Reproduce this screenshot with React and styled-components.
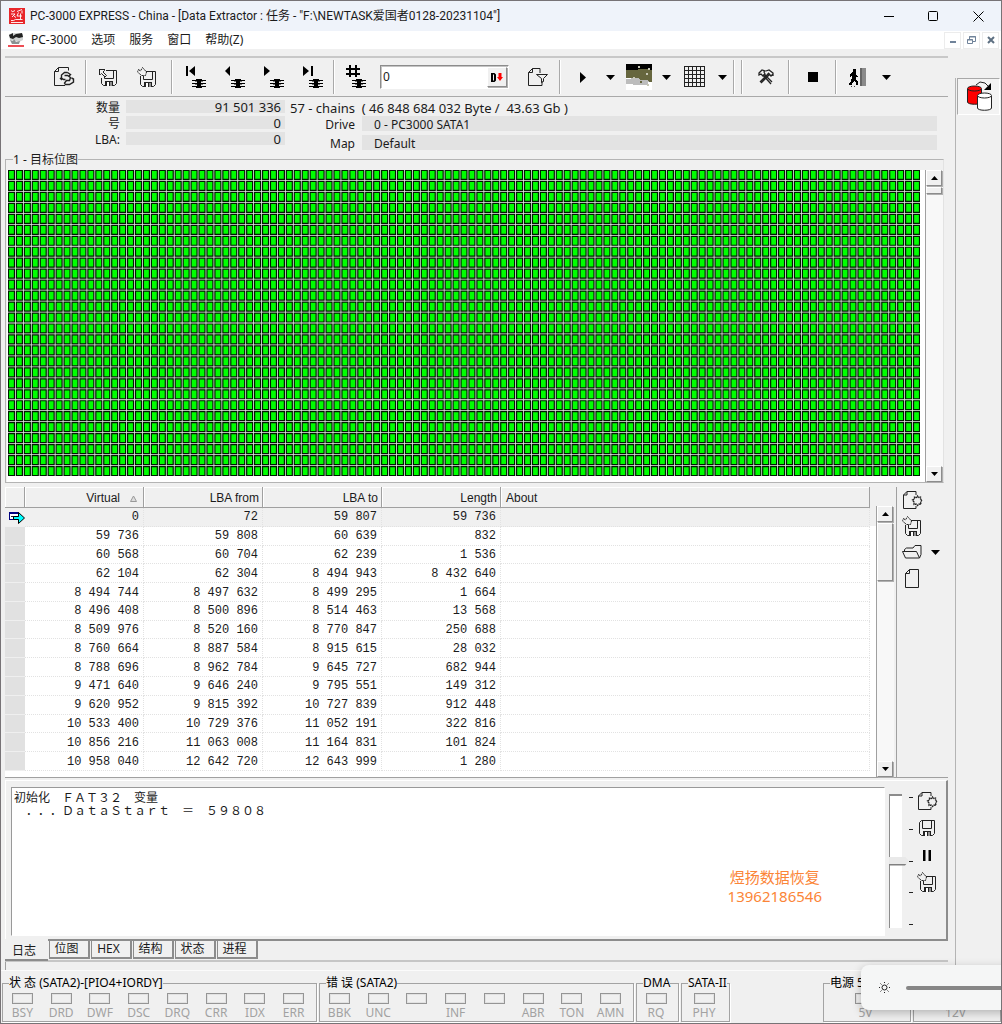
import React from "react";
import styled, { createGlobalStyle, css } from "styled-components";

const UI = `"Noto Sans", "Noto Sans CJK SC", sans-serif`;
const FACE = "#f0f0f0";
const SHADOW = "#8c8c8c";

const Global = createGlobalStyle`
  *, *::before, *::after { box-sizing: border-box; }
  body { margin: 0; background: ${FACE}; font: 12px/16px ${UI}; color: #1b1b1b; }
  button, input, textarea { font: inherit; color: inherit; }
  button { border: 0; padding: 0; background: none; }
  svg { display: block; flex: none; }
`;

/* ---------- frame ---------- */
const Frame = styled.div`
  position: relative;
  display: flex;
  flex-direction: column;
  min-height: 100vh;
  border: 1px solid #777376;
  overflow: hidden;
`;
const TitleBar = styled.header`
  display: flex;
  align-items: center;
  height: 30px;
  padding-left: 8px;
  background: #eff3fa;
`;
const TitleText = styled.h1`
  flex: 1;
  margin: 0 0 0 5px;
  font: 400 12px/16px Roboto, "Noto Sans CJK SC", sans-serif;
  white-space: pre;
`;
const CaptionButton = styled.button`
  display: grid;
  place-items: center;
  width: 45px;
  height: 30px;
`;
const MenuBar = styled.nav`
  display: flex;
  align-items: center;
  height: 18px;
  padding-left: 7px;
  background: #fff;
`;
const MenuList = styled.div`
  display: flex;
  flex: 1;
  gap: 14px;
  margin-left: 7px;
`;
const MenuItem = styled.button`
  height: 18px;
  line-height: 18px;
`;
const MdiButton = styled.button`
  display: grid;
  place-items: center;
  width: 17px;
  height: 17px;
  margin-right: 2px;
  border: 1px solid #ececec;
  background: #fff;
`;
const Body = styled.div`
  display: flex;
  flex: 1;
`;
const Main = styled.main`
  display: flex;
  flex-direction: column;
  flex: 1;
  min-width: 0;
  padding: 7px 7px 0 4px;
`;
const Side = styled.aside`
  width: 46px;
  margin-top: 29px;
  border-left: 1px solid #b4b4b4;
`;
const SideTool = styled.button`
  display: grid;
  place-items: center;
  width: 43px;
  height: 37px;
  margin-left: 1px;
  border: 1px solid;
  border-color: #a8a8a8 #fff #fff #a8a8a8;
  background: #f3f3f3;
`;

/* ---------- toolbar ---------- */
const Toolbar = styled.div`
  display: flex;
  align-items: center;
  height: 41px;
  border-top: 2px solid #c8c8c8;
  border-bottom: 1px solid #a9a9a9;
`;
const Group = styled.div`
  display: flex;
  align-items: center;
  padding: 0 ${(p) => p.$right || 0}px 0 ${(p) => p.$left || 0}px;
`;
const Sep = styled.span`
  width: 2px;
  height: 34px;
  border-left: 1px solid #a9a9a9;
  background: #fff;
`;
const Tool = styled.button`
  display: grid;
  place-items: center;
  width: ${(p) => (p.$narrow ? 17 : 39)}px;
  height: 34px;
`;
const Field = styled.div`
  display: flex;
  width: 129px;
  height: 24px;
  margin: 0 9px 0 5px;
  border: 1px solid;
  border-color: ${SHADOW} #fff #fff ${SHADOW};
  box-shadow: inset 1px 1px 0 #c4c4c4;
  background: #fff;
`;
const FieldInput = styled.input`
  flex: 1;
  min-width: 0;
  padding: 0 2px;
  border: 0;
  outline: 0;
  background: none;
`;
const raised = css`
  border: 1px solid;
  border-color: #fff ${SHADOW} ${SHADOW} #fff;
  box-shadow: 1px 1px 0 #b0b0b0;
  background: ${FACE};
`;
const FieldButton = styled.button`
  display: grid;
  place-items: center;
  width: 20px;
  margin: 1px;
  ${raised}
`;

/* ---------- info ---------- */
const Info = styled.section`
  display: flex;
  height: 56px;
  padding-top: 3px;
`;
const InfoLeft = styled.dl`
  display: grid;
  grid-template-columns: 115px 159px;
  grid-auto-rows: 16px;
  column-gap: 6px;
  margin: 0;
`;
const InfoTerm = styled.dt`
  text-align: right;
`;
const Count = styled.dd`
  height: 13px;
  margin: 0;
  padding-right: 4px;
  font-size: 13px;
  line-height: 14px;
  text-align: right;
  background: #e3e3e3;
`;
const InfoRight = styled.div`
  flex: 1;
  padding: 0 11px 0 5px;
`;
const Chains = styled.p`
  margin: 0;
  font-size: 13px;
  line-height: 16px;
  white-space: pre;
`;
const DriveList = styled.dl`
  display: grid;
  grid-template-columns: 65px 1fr;
  grid-auto-rows: 15px;
  gap: 4px 7px;
  margin: 0;
`;
const DriveTerm = styled.dt`
  line-height: 18px;
  text-align: right;
`;
const DriveValue = styled.dd`
  margin: 0;
  padding-left: 12px;
  line-height: 17px;
  background: #e3e3e3;
`;

/* ---------- sector map ---------- */
const MapBox = styled.fieldset`
  display: flex;
  min-width: 0;
  margin: 0 4px 0 0;
  padding: 0 0 0 1px;
  border: 1px solid #b4b4b4;
  border-right-color: #e2e2e2;
`;
const MapLegend = styled.legend`
  height: 13px;
  margin-left: 6px;
  padding: 0;
  line-height: 13px;
`;
const MapArea = styled.div`
  flex: 1;
  min-width: 0;
  height: 312px;
  margin-top: 4px;
  padding: 0 5px 6px 1px;
  background: #fff;
`;
const MapSvg = styled.svg`
  width: 100%;
  height: 306px;
`;

/* ---------- classic scroll bar ---------- */
const Bar = styled.div`
  display: flex;
  flex-direction: column;
  width: 18px;
  margin-top: ${(p) => p.$top || 0}px;
  border-left: 1px solid #a0a0a0;
  background: #f8f8f8;
`;
const BarButton = styled.button`
  display: grid;
  place-items: center;
  width: 16px;
  height: 16px;
  ${raised}
`;
const BarThumb = styled.div`
  width: 16px;
  height: ${(p) => p.$size}px;
  margin-top: 1px;
  ${raised}
`;
const BarTrack = styled.div`
  flex: 1;
`;

/* ---------- chain table ---------- */
const ChainPane = styled.section`
  display: flex;
  margin-top: 4px;
  height: 291px;
  border-bottom: 1px solid #a0a0a0;
`;
const TableWrap = styled.div`
  flex: 1;
  min-width: 0;
  padding-right: 6px;
  overflow: hidden;
  background: linear-gradient(${FACE} 39px, #fff 39px);
`;
const Table = styled.table`
  width: 100%;
  height: 284px;
  table-layout: fixed;
  border-collapse: separate;
  border-spacing: 0;
`;
const Head = styled.th`
  height: 21px;
  padding: 2px ${(p) => (p.$sorted ? 6 : 3)}px 0 5px;
  border-right: 1px solid #a0a0a0;
  border-bottom: 1px solid #a0a0a0;
  box-shadow: inset 1px 1px 0 #fff;
  background: ${FACE};
  font: 12px/18px "Liberation Sans", Arial, sans-serif;
  text-align: ${(p) => (p.$left ? "left" : "right")};
`;
const HeadInner = styled.span`
  display: flex;
  justify-content: flex-end;
  align-items: center;
  gap: 10px;
`;
const Cell = styled.td`
  padding: 2px 4px 0 0;
  border-right: 1px dotted #e2e2e2;
  border-bottom: 1px dotted #e2e2e2;
  background: ${(p) => (p.$active ? FACE : "#fff")};
  font: 12px/15px "Liberation Mono", monospace;
  text-align: right;
`;
const Mark = styled.td`
  padding: 2px 0 0 3px;
  border-bottom: 1px solid #efefef;
  background: ${(p) => (p.$active ? FACE : "#e1e1e1")};
`;
const PaneTools = styled.div`
  display: flex;
  flex-direction: column;
  width: 52px;
  margin-left: 2px;
  padding: 0 0 0 4px;
  border-left: 1px solid #a0a0a0;
`;
const PaneRow = styled.div`
  display: flex;
  align-items: center;
  gap: 5px;
  height: 26px;
`;
const SmallTool = styled.button`
  display: grid;
  place-items: center;
  width: ${(p) => (p.$narrow ? 14 : 22)}px;
  height: 26px;
`;

/* ---------- log ---------- */
const LogPanel = styled.section`
  position: relative;
  display: flex;
  flex: 1;
  min-height: 158px;
  margin-top: 2px;
  padding: 6px 0 3px 5px;
  border: solid;
  border-width: 1px 2px 2px 1px;
  border-color: #fff ${SHADOW} ${SHADOW} #fff;
`;
const LogText = styled.textarea`
  flex: 1;
  min-width: 0;
  padding: 2px 2px;
  border: 1px solid;
  border-color: #999 #fff #fff #999;
  outline: 0;
  resize: none;
  overflow: hidden;
  background: #fff;
  font: 12px/13px "Noto Sans CJK SC", sans-serif;
  text-spacing-trim: space-all;
`;
const Contact = styled.address`
  position: absolute;
  right: 124px;
  bottom: 33px;
  color: #fb8537;
  font: normal 15px/19px ${UI};
  text-align: center;
`;
const Level = styled.div`
  display: flex;
  align-items: flex-start;
  padding: 7px 0 0 4px;
`;
const LevelRange = styled.input`
  appearance: none;
  writing-mode: vertical-lr;
  width: 20px;
  height: 134px;
  margin: 0;
  border: 0;
  outline: 0;
  background:
    linear-gradient(${SHADOW}, ${SHADOW}) 0 0 / 13px 2px no-repeat,
    linear-gradient(${SHADOW}, ${SHADOW}) 0 0 / 1px 134px no-repeat,
    linear-gradient(#fff, #fff) 0 0 / 13px 134px no-repeat;
  &::-webkit-slider-thumb {
    appearance: none;
    width: 20px;
    height: 9px;
    background: linear-gradient(#e9e9e9 7px, #808080 7px);
    clip-path: polygon(0 0, 80% 0, 100% 50%, 80% 100%, 0 100%);
  }
`;
const Ticks = styled.div`
  display: flex;
  flex-direction: column;
  justify-content: space-between;
  height: 134px;
  padding: 3px 0;
`;
const Tick = styled.i`
  width: 4px;
  height: 1px;
  background: #222;
`;
const LogTools = styled.div`
  display: flex;
  flex-direction: column;
  gap: 1px;
  width: 33px;
  padding: 1px 0 0 3px;
`;
const Tabs = styled.div`
  position: relative;
  display: flex;
  height: 23px;
  margin-top: -2px;
  border-bottom: 2px solid #c6c6c6;
`;
const Tab = styled.button`
  width: ${(p) => (p.$active ? 43 : 41)}px;
  height: ${(p) => (p.$active ? 22 : 20)}px;
  margin-right: 1px;
  padding-right: 5px;
  padding-top: ${(p) => (p.$active ? 4 : 0)}px;
  border: solid ${SHADOW};
  border-width: ${(p) => (p.$active ? "0 0 2px 0" : "2px 2px 2px 1px")};
  background: ${FACE};
  line-height: 16px;
`;
const TabRest = styled.div`
  height: 8px;
  border-left: 1px solid #a0a0a0;
`;

/* ---------- status ---------- */
const StatusBar = styled.footer`
  display: flex;
  height: 53px;
  padding: 4px 0 1px 1px;
  gap: 2px;
  border-top: 1px solid #fbfbfb;
`;
const Flags = styled.fieldset`
  display: flex;
  width: ${(p) => p.$w}px;
  min-width: 0;
  margin: 0;
  padding: 0 3px 0 0;
  border: 1px solid #a3a3a3;
  box-shadow: 1px 1px 0 #fff;
`;
const FlagsLegend = styled.legend`
  height: 16px;
  margin-left: 6px;
  padding: 0;
  white-space: pre;
  color: #000;
`;
const Flag = styled.div`
  display: flex;
  flex: 1;
  flex-direction: column;
  align-items: center;
  padding-top: 2px;
  color: #a2a2a2;
`;
const Led = styled.i`
  width: 21px;
  height: 11px;
  margin-bottom: 1px;
  border: 1px solid #959595;
  box-shadow: inset 0 0 0 1px #e2e2e2;
`;
const Spacer = styled.div`
  flex: 1;
`;
const Brightness = styled.label`
  position: absolute;
  right: -20px;
  bottom: 13px;
  display: flex;
  align-items: center;
  gap: 16px;
  width: 160px;
  height: 45px;
  padding: 0 0 0 18px;
  border-radius: 8px;
  background: #f5f6f6;
  box-shadow: 0 3px 10px rgba(0, 0, 0, 0.25);
`;
const BrightnessRange = styled.input`
  appearance: none;
  width: 150px;
  height: 4px;
  margin: 0;
  border-radius: 2px;
  background: #868686;
  &::-webkit-slider-thumb { appearance: none; width: 1px; height: 4px; }
`;

/* ---------- icons ---------- */
const Svg = ({ w, h, children, ...rest }) => (
  <svg width={w} height={h} viewBox={`0 0 ${w} ${h}`} fill="none" stroke="#222" aria-hidden="true" {...rest}>
    {children}
  </svg>
);
const Down = () => (
  <Svg w={9} h={5} stroke="none"><path d="M0 0h9L4.500 5z" fill="#000" /></Svg>
);
const SmallDown = () => (
  <Svg w={7} h={4} stroke="none"><path d="M0 0h7L3.500 4z" fill="#000" /></Svg>
);
const SmallUp = () => (
  <Svg w={7} h={4} stroke="none"><path d="M0 4h7L3.500 0z" fill="#000" /></Svg>
);
const Logo = () => (
  <Svg w={16} h={16} stroke="#fff">
    <path d="M0 0h16v16H0z" fill="#e8262b" stroke="none" />
    <path d="M2 2.500l2 1.500M5.500 2l-1 2M8 3.500l5-2M2 6h4L3 9M5 8l2 1.500M9.500 4.500L8 8h5M11.500 5.500v5.500M13 2.500v3M2 12.500h2.500l2-1h7M2 14.500h12" strokeWidth=".9" />
  </Svg>
);
const DocLogo = () => (
  <Svg w={16} h={14} stroke="none">
    <path d="M1 1l6-1 8 1v6l-4 2-9-2z" fill="#cfd2d2" />
    <path d="M1 2l4-2v3l3-2 6-1 1 4-4 1-3-1-3 2-3-1z" fill="#222" />
    <path d="M2 7l3 1 1-2 2 3 4-1-1 3H4z" fill="#8b9191" />
    <path d="M0 12h16v2H0z" fill="#ee4e55" />
  </Svg>
);
const Disk = ({ x = 0, y = 0 }) => (
  <g transform={`translate(${x} ${y})`}>
    <path d="M2.500.5h13v13l-2 2h-11l-2-2v-11z" />
    <path d="M3.500.5v8h9v-8" />
    <path d="M4 11h8v5H4z" fill="#222" stroke="none" />
    <path d="M6 12h2v4H6zM9.500 12h1v4h-1z" fill="#fff" stroke="none" />
  </g>
);
const SaveIcon = () => <Svg w={16} h={16}><Disk /></Svg>;
const LoadDisk = () => (
  <Svg w={20} h={19}>
    <Disk x={3} y={2} />
    <path d="M0 0h8v6l-3 4H0z" fill={FACE} stroke="none" />
    <path d="M1 1.500h6M1.500 1v6M6.500 1.500v1L5 4l3.500 3.500-1.500 1.500L3.500 5.500 2.500 6.500h-1" />
  </Svg>
);
const StoreDisk = () => (
  <Svg w={20} h={20}>
    <Disk x={3} y={4} />
    <path d="M0 0h9v7l-2 2H0z" fill={FACE} stroke="none" />
    <path d="M1.500 2.500l2 1.500L5.500.5l4 4.500-1 3.500h-4l-4-3.500z" strokeDasharray="2.200 .8" />
  </Svg>
);
const PageLoop = () => (
  <Svg w={22} h={20}>
    <path d="M12 18.500H1.500v-14l4-4h10v3M1.500 4.500h4v-4" />
    <path d="M14.500 5.500h-3l-3 2.500v3l2 1.500h2M11.500 8.500h3l3 2-1 3h-3l-2 2.500 1 1.500h4l4-2.500v-3l-2-1M14.500 5.500l3 2-2 2M7 11l2 2" strokeWidth="1.400" />
  </Svg>
);
const Nav = ({ kind }) => (
  <Svg w={20} h={24} stroke="none" fill="#000">
    {kind === "first" && <path d="M0 1h2v10H0zM9 1v10L3 6z" />}
    {kind === "prev" && <path d="M5 1v10L0 6z" />}
    {kind === "next" && <path d="M0 1v10l6-5z" />}
    {kind === "last" && <path d="M0 1v10l6-5zM8 1h2v10H8z" />}
    {kind === "hash" && <path d="M3 0h2v12H3zM9 0h2v12H9zM0 3h14v2H0zM0 8h14v2H0z" />}
    <path d="M6 15h14v1H6zM6 18h14v1H6zM6 21h14v1H6zM10 14h6v1h-1v7h1v1h-6v-1h1v-7h-1z" />
    <path d="M9 16h2v1H9zM15 16h2v1h-2zM9 19h2v1H9zM15 19h2v1h-2z" fill="#777" />
  </Svg>
);
const PageFilter = () => (
  <Svg w={21} h={20}>
    <path d="M13 6V1.500H5.500l-4 4v13H15V14M1.500 5.500h4v-4" />
    <path d="M9.500 7.500h11l-4 4v3l-2 1v-4z" />
  </Svg>
);
const Play = () => <Svg w={6} h={11} stroke="none"><path d="M0 0v11l6-5.500z" fill="#000" /></Svg>;
const Scene = () => (
  <Svg w={26} h={26} stroke="none" shapeRendering="crispEdges">
    <path d="M0 0h26v26H0z" fill="#fff" />
    <path d="M0 0h26v7H0z" fill="#000" />
    <path d="M0 6h12V5h11v1h3v12h-9l-6-4H0z" fill="#66663e" />
    <path d="M0 15h4l2-1h6l3 2h8l-1 5H8l-2-1H0z" fill="#bdbdbd" />
    <path d="M12 2h2v2h-2zM20 9h2v2h-2zM22 4h2v2h-2zM7 13h2v2H7zM21 20h2v2h-2z" fill="#c8c8b8" />
    <path d="M14 17h2v2h-2zM22 15h2v2h-2z" fill="#66663e" />
  </Svg>
);
const GridIcon = () => (
  <Svg w={22} h={22} shapeRendering="crispEdges">
    <path d="M.5.5h20v20H.5zM4.500 0v21M8.500 0v21M12.500 0v21M16.500 0v21M0 4.500h21M0 8.500h21M0 12.500h21M0 16.500h21" />
  </Svg>
);
const Tools = () => (
  <Svg w={16} h={16}>
    <path d="M3 14L12 5M2 13l9-9M13 15L5 6M14 13L6 5" strokeWidth="1.300" />
    <path d="M1 4l3-3 3 1-1 1 1 2-2 2-2-2-2 1zM8 2l3-1 4 3v3M10 4l3 3 2-2" strokeWidth="1.300" />
  </Svg>
);
const Stop = () => <Svg w={10} h={10} stroke="none"><path d="M0 0h10v10H0z" fill="#000" /></Svg>;
const Exit = () => (
  <Svg w={19} h={19} stroke="none" shapeRendering="crispEdges">
    <path d="M4 1h3v3H4zM3 4h4v3l2 1v1H7v3l2 2v3H7v-2l-2-2-2 2v2H0v-1l2-3 1-3V7L1 9V6z" fill="#000" />
    <path d="M2 18h1v1H2zM5 18h1v1H5z" fill="#444" />
    <path d="M11 0h6v18h-6z" fill="#8a8a8a" />
    <path d="M11 0h2v18h-2z" fill="#666" />
  </Svg>
);
const PageStar = () => (
  <Svg w={21} h={20}>
    <path d="M14 5V1.500H5L1.500 5v13.500H14V16M1.500 5H5V1.500" />
    <path d="M15.500 6l1 1.500 2-.5v2l1.500 1-1.500 2 .5 2.500-2-.5-1.500 1.500-1.500-1.500-2 .5v-2.500L10.500 10l2-1V7l2 .5z" strokeDasharray="2 .6" strokeWidth="1.300" />
  </Svg>
);
const Folder = () => (
  <Svg w={20} h={14}>
    <path d="M2.500 6V4.500l2-1.500h6.500l2-2.500h6v9l-1.500 3.500M.5 6.500h14l3 6.500h-14z" />
  </Svg>
);
const Page = () => (
  <Svg w={14} h={19}><path d="M4.500.5h9v18H.5v-14zM.5 4.500h4v-4" /></Svg>
);
const Pause = () => <Svg w={8} h={11} stroke="none"><path d="M0 0h2.500v11H0zM5.500 0H8v11H5.500z" fill="#000" /></Svg>;
const Cylinders = () => (
  <Svg w={26} h={31}>
    <path d="M1.500 8v13c0 3 14 3 14 0V8" fill="#f00" />
    <ellipse cx="8.500" cy="7.500" rx="7" ry="2.500" fill="#f00" />
    <path d="M11.500 15v12c0 3 14 3 14 0V15" fill="#fff" />
    <ellipse cx="18.500" cy="14.500" rx="7" ry="2.500" fill="#fff" />
    <path d="M10 4l4-3 5 1 3 3" />
    <path d="M25 2v7h-7z" fill="#000" stroke="none" />
  </Svg>
);
const RowMark = () => (
  <Svg w={17} h={13} shapeRendering="crispEdges">
    <path d="M1.500 1.500h9v7h-9z" fill="#fff" stroke="#000080" />
    <path d="M1 1h10v2H1z" fill="#000080" stroke="none" />
    <path d="M3 5.500h6" />
    <path d="M5.500 5.500h5v-4l6 5.500-6 5.500v-4h-5z" fill="#0ff" stroke="#000" shapeRendering="auto" />
  </Svg>
);
const Sun = () => (
  <Svg w={11} h={11}>
    <circle cx="5.500" cy="5.500" r="2.500" />
    <path d="M5.500 0v1M5.500 10v1M0 5.500h1M10 5.500h1M1.500 1.500l1 1M8.500 8.500l1 1M9.500 1.500l-1 1M1.500 9.500l1-1" />
  </Svg>
);

/* ---------- data ---------- */
const COLS = 115;
const ROWS = 28;
const cells = [];
for (let r = 0; r < ROWS; r++)
  for (let c = 0; c < COLS; c++) cells.push(`M${c * 8 + 0.5} ${r * 11 + 0.5}h6v9h-6z`);
const CELL_PATH = cells.join("");

const CHAINS = [
  ["0", "72", "59 807", "59 736"],
  ["59 736", "59 808", "60 639", "832"],
  ["60 568", "60 704", "62 239", "1 536"],
  ["62 104", "62 304", "8 494 943", "8 432 640"],
  ["8 494 744", "8 497 632", "8 499 295", "1 664"],
  ["8 496 408", "8 500 896", "8 514 463", "13 568"],
  ["8 509 976", "8 520 160", "8 770 847", "250 688"],
  ["8 760 664", "8 887 584", "8 915 615", "28 032"],
  ["8 788 696", "8 962 784", "9 645 727", "682 944"],
  ["9 471 640", "9 646 240", "9 795 551", "149 312"],
  ["9 620 952", "9 815 392", "10 727 839", "912 448"],
  ["10 533 400", "10 729 376", "11 052 191", "322 816"],
  ["10 856 216", "11 063 008", "11 164 831", "101 824"],
  ["10 958 040", "12 642 720", "12 643 999", "1 280"],
];
const LOG = "初始化　ＦＡＴ３２　变量\n　．．．ＤａｔａＳｔａｒｔ　＝　５９８０８";
const FLAG_GROUPS = [
  { name: "状 态 (SATA2)-[PIO4+IORDY]", w: 315, flags: ["BSY", "DRD", "DWF", "DSC", "DRQ", "CRR", "IDX", "ERR"] },
  { name: "错 误 (SATA2)", w: 315, flags: ["BBK", "UNC", "", "INF", "", "ABR", "TON", "AMN"] },
  { name: "DMA", w: 43, flags: ["RQ"] },
  { name: "SATA-II", w: 49, flags: ["PHY"] },
];

const FlagGroup = ({ name, w, flags }) => (
  <Flags $w={w}>
    <FlagsLegend>{name}</FlagsLegend>
    {flags.map((f, i) => (
      <Flag key={i}><Led />{f}</Flag>
    ))}
  </Flags>
);
const ScrollBar = ({ size, top }) => (
  <Bar $top={top}>
    <BarButton aria-label="Scroll up"><SmallUp /></BarButton>
    <BarThumb $size={size} />
    <BarTrack />
    <BarButton aria-label="Scroll down"><SmallDown /></BarButton>
  </Bar>
);
const DropTool = () => <Tool $narrow aria-label="More"><Down /></Tool>;

export default function App() {
  return (
    <Frame>
      <Global />
      <TitleBar>
        <Logo />
        <TitleText>{'PC-3000 EXPRESS - China - [Data Extractor : 任务 - "F:\\NEWTASK爱国者0128-20231104"]'}</TitleText>
        <CaptionButton aria-label="Minimize"><Svg w={10} h={10} stroke="#000"><path d="M0 5.500h10" /></Svg></CaptionButton>
        <CaptionButton aria-label="Maximize"><Svg w={11} h={11} stroke="#000"><rect x=".5" y=".5" width="9" height="9" rx="1" /></Svg></CaptionButton>
        <CaptionButton aria-label="Close"><Svg w={11} h={11} stroke="#000"><path d="M.5.5l10 10M10.500.5l-10 10" /></Svg></CaptionButton>
      </TitleBar>
      <MenuBar>
        <DocLogo />
        <MenuList>
          {["PC-3000", "选项", "服务", "窗口", "帮助(Z)"].map((m) => <MenuItem key={m}>{m}</MenuItem>)}
        </MenuList>
        <MdiButton aria-label="Minimize document"><Svg w={8} h={8} stroke="#70839a" strokeWidth="2"><path d="M1 6h6" /></Svg></MdiButton>
        <MdiButton aria-label="Restore document"><Svg w={9} h={9} stroke="#70839a"><path d="M2.500 3V.5h6v5H6M2 1h7M.5 3.500h5v4h-5zM0 4h6" /></Svg></MdiButton>
        <MdiButton aria-label="Close document"><Svg w={8} h={8} stroke="#5e7082" strokeWidth="2"><path d="M1 1l6 6M7 1L1 7" /></Svg></MdiButton>
      </MenuBar>
      <Body>
        <Main>
          <Toolbar>
            <Group $left={39}><Tool aria-label="Reload task"><PageLoop /></Tool></Group>
            <Group $left={2}><Sep /></Group>
            <Group $left={1} $right={5}>
              <Tool aria-label="Load"><LoadDisk /></Tool>
              <Tool aria-label="Save"><StoreDisk /></Tool>
            </Group>
            <Sep />
            <Group $left={3} $right={1}>
              {["first", "prev", "next", "last"].map((k) => <Tool key={k} aria-label={k}><Nav kind={k} /></Tool>)}
            </Group>
            <Sep />
            <Group $left={1} $right={2}>
              <Tool aria-label="Go to number"><Nav kind="hash" /></Tool>
              <Field>
                <FieldInput aria-label="Sector" defaultValue="0" />
                <FieldButton aria-label="Decimal">
                  <Svg w={12} h={9} stroke="none">
                    <path d="M0 0h3.500L5 1.500v6L3.500 9H0zM2 1.500v6h1v-6z" fill="#000" fillRule="evenodd" />
                    <path d="M7.500 0h3v4H12L9 8 6 4h1.500z" fill="#f00" />
                  </Svg>
                </FieldButton>
              </Field>
              <Tool aria-label="Filter"><PageFilter /></Tool>
            </Group>
            <Sep />
            <Group $left={2} $right={2}>
              <Tool aria-label="Start"><Play /></Tool>
              <DropTool />
              <Tool aria-label="Map view"><Scene /></Tool>
              <DropTool />
              <Tool aria-label="Grid"><GridIcon /></Tool>
              <DropTool />
            </Group>
            <Sep />
            <Group $left={6}><Sep /></Group>
            <Group $left={3} $right={3}><Tool aria-label="Settings"><Tools /></Tool></Group>
            <Sep />
            <Group $left={3} $right={3}><Tool aria-label="Stop"><Stop /></Tool></Group>
            <Sep />
            <Group $left={2}>
              <Tool aria-label="Exit"><Exit /></Tool>
              <DropTool />
            </Group>
          </Toolbar>

          <Info>
            <InfoLeft>
              <InfoTerm>数量</InfoTerm><Count>91 501 336</Count>
              <InfoTerm>号</InfoTerm><Count>0</Count>
              <InfoTerm>LBA:</InfoTerm><Count>0</Count>
            </InfoLeft>
            <InfoRight>
              <Chains>{"57 - chains  ( 46 848 684 032 Byte /  43.63 Gb )"}</Chains>
              <DriveList>
                <DriveTerm>Drive</DriveTerm><DriveValue>0 - PC3000 SATA1</DriveValue>
                <DriveTerm>Map</DriveTerm><DriveValue>Default</DriveValue>
              </DriveList>
            </InfoRight>
          </Info>

          <MapBox>
            <MapLegend>1 - 目标位图</MapLegend>
            <MapArea>
              <MapSvg viewBox="0 0 919 307" preserveAspectRatio="none" role="img" aria-label="目标位图">
                <rect width="919" height="307" fill="#ececec" />
                <path d={CELL_PATH} fill="#00ff00" stroke="#001c00" strokeWidth="1.2" />
              </MapSvg>
            </MapArea>
            <ScrollBar size={7} top={4} />
          </MapBox>

          <ChainPane>
            <TableWrap>
              <Table>
                <colgroup>
                  <col style={{ width: 20 }} />
                  <col style={{ width: 119 }} />
                  <col style={{ width: 119 }} />
                  <col style={{ width: 119 }} />
                  <col style={{ width: 119 }} />
                  <col />
                </colgroup>
                <thead>
                  <tr>
                    <Head aria-label="Current" />
                    <Head $sorted>
                      <HeadInner>
                        Virtual
                        <Svg w={7} h={7} stroke="#999"><path d="M.5 6.500L3.500 1l3 5.500z" fill="#ddd" /></Svg>
                      </HeadInner>
                    </Head>
                    <Head>LBA from</Head>
                    <Head>LBA to</Head>
                    <Head>Length</Head>
                    <Head $left>About</Head>
                  </tr>
                </thead>
                <tbody>
                  {CHAINS.map((row, i) => (
                    <tr key={row[0]}>
                      <Mark $active={i === 0}>{i === 0 && <RowMark />}</Mark>
                      {row.map((v, j) => <Cell key={j} $active={i === 0}>{v}</Cell>)}
                      <Cell $active={i === 0} />
                    </tr>
                  ))}
                </tbody>
              </Table>
            </TableWrap>
            <ScrollBar size={58} top={19} />
            <PaneTools>
              <PaneRow><SmallTool aria-label="New"><PageStar /></SmallTool></PaneRow>
              <PaneRow><SmallTool aria-label="Save chains"><StoreDisk /></SmallTool></PaneRow>
              <PaneRow>
                <SmallTool aria-label="Open"><Folder /></SmallTool>
                <SmallTool $narrow aria-label="Open recent"><Down /></SmallTool>
              </PaneRow>
              <PaneRow><SmallTool aria-label="Blank"><Page /></SmallTool></PaneRow>
            </PaneTools>
          </ChainPane>

          <LogPanel>
            <LogText readOnly aria-label="日志" value={LOG} />
            <Contact>煜扬数据恢复<br />13962186546</Contact>
            <Level>
              <LevelRange type="range" aria-label="Detail level" defaultValue="50" />
              <Ticks><Tick /><Tick /><Tick /><Tick /><Tick /></Ticks>
            </Level>
            <LogTools>
              <SmallTool aria-label="Clear log"><PageStar /></SmallTool>
              <SmallTool aria-label="Save log"><SaveIcon /></SmallTool>
              <SmallTool aria-label="Pause log"><Pause /></SmallTool>
              <SmallTool aria-label="Save log as"><StoreDisk /></SmallTool>
            </LogTools>
          </LogPanel>
          <Tabs role="tablist">
            {["日志", "位图", "HEX", "结构", "状态", "进程"].map((t, i) => (
              <Tab key={t} role="tab" aria-selected={i === 0} $active={i === 0}>{t}</Tab>
            ))}
          </Tabs>
          <TabRest />
        </Main>
        <Side>
          <SideTool aria-label="Copy disk"><Cylinders /></SideTool>
        </Side>
      </Body>
      <StatusBar>
        {FLAG_GROUPS.map((g) => <FlagGroup key={g.name} {...g} />)}
        <Spacer />
        <FlagGroup name="电源 5V" w={88} flags={["5V"]} />
        <FlagGroup name="" w={88} flags={["12V"]} />
      </StatusBar>
      <Brightness>
        <Sun />
        <BrightnessRange type="range" aria-label="Brightness" defaultValue="100" />
      </Brightness>
    </Frame>
  );
}
